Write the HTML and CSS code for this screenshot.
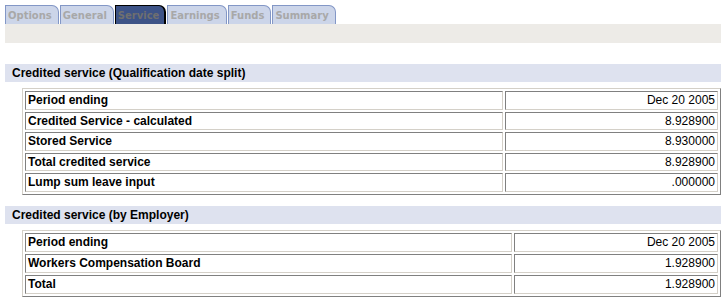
FILE: index.html
```html
<!DOCTYPE html>
<html lang="en">
  <head>
    <meta charset="UTF-8" />
    <title>Service</title>
    <link rel="stylesheet" href="styles.css">
  </head>
  <body>
    <div class="tabs">
      <span class="tab">Options</span>
      <span class="tab">General</span>
      <span class="tab active">Service</span>
      <span class="tab">Earnings</span>
      <span class="tab">Funds</span>
      <span class="tab">Summary</span>
    </div>
    <div class="tab-band"></div>

    <h2 class="section-title">Credited service (Qualification date split)</h2>
    <table class="data-table split">
      <tr><td class="label">Period ending</td><td class="value">Dec 20 2005</td></tr>
      <tr><td class="label">Credited Service - calculated</td><td class="value">8.928900</td></tr>
      <tr><td class="label">Stored Service</td><td class="value">8.930000</td></tr>
      <tr><td class="label">Total credited service</td><td class="value">8.928900</td></tr>
      <tr><td class="label">Lump sum leave input</td><td class="value">.000000</td></tr>
    </table>

    <h2 class="section-title second">Credited service (by Employer)</h2>
    <table class="data-table employer">
      <tr><td class="label">Period ending</td><td class="value">Dec 20 2005</td></tr>
      <tr><td class="label">Workers Compensation Board</td><td class="value">1.928900</td></tr>
      <tr><td class="label">Total</td><td class="value">1.928900</td></tr>
    </table>
  </body>
</html>
```

FILE: styles.css
```css
body {
  margin: 0;
  padding: 5px 0 0 5px;
  background-color: #fff;
  font-family: "Liberation Sans", Arial, sans-serif;
  font-size: 12px;
  color: #000;
}

/* Tabs */
.tabs {
  display: flex;
  gap: 1px;
  height: 19px;
}

.tab {
  display: block;
  height: 18px;
  line-height: 19px;
  padding: 0 6px 0 2px;
  background-color: #ccd5e9;
  border: 1px solid #8397c6;
  border-bottom: none;
  border-top-right-radius: 7px;
  font-family: "DejaVu Sans", Verdana, sans-serif;
  font-size: 10px;
  font-weight: bold;
  color: #a8a8a8;
}

.tab.active {
  background-color: #3d5387;
  border-color: #000;
  border-right-width: 2px;
  padding-right: 5px;
  color: #6f6f6f;
}

.tab-band {
  height: 19px;
  background-color: #edebe7;
}

/* Sections */
.section-title {
  margin: 21px 0 6px 0;
  padding: 0 7px;
  height: 18px;
  line-height: 18px;
  background-color: #dee2ef;
  font-size: 12px;
  font-weight: bold;
}

.section-title.second {
  margin-top: 11px;
}

.data-table {
  margin-left: 17px;
  width: 699px;
  border-collapse: separate;
  border-spacing: 2px;
  border: 1px solid;
  border-color: #d4d0c8 #808080 #808080 #d4d0c8;
}

.data-table td {
  height: 16.5px;
  padding: 0 2px;
  border: 1px solid;
  border-color: #808080 #d4d0c8 #d4d0c8 #808080;
}

.data-table .label {
  font-weight: bold;
}

.data-table .value {
  text-align: right;
}

.split .label {
  width: 472px;
}

.employer td {
  height: 17px;
}

.employer .label {
  width: 481px;
}
```
